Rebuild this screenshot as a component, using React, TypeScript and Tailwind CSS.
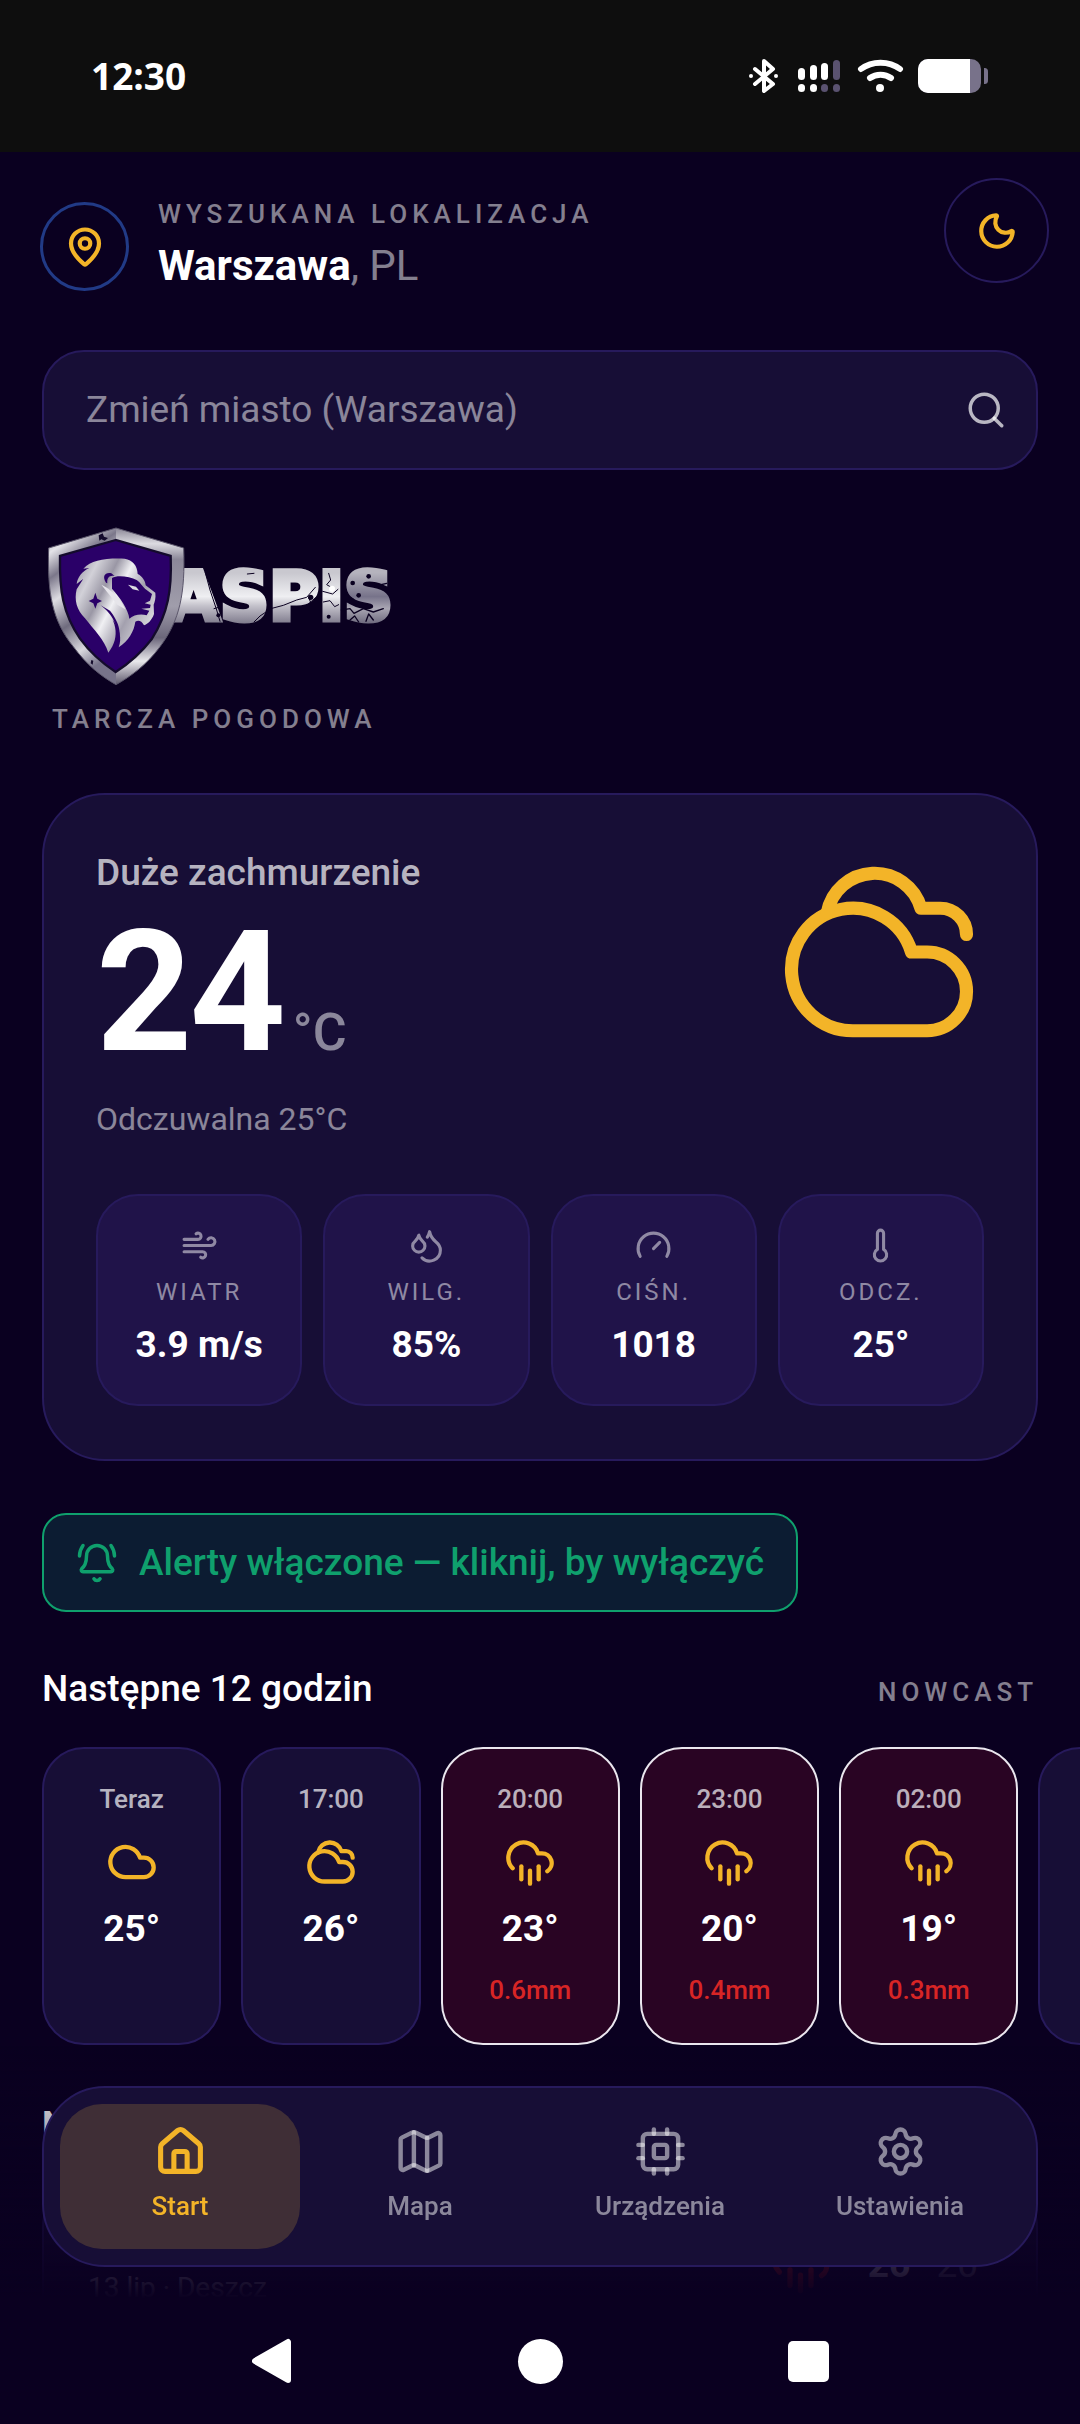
import type { ReactNode } from "react";
import {
  BellRing,
  Cloud,
  CloudRain,
  Cloudy,
  Droplets,
  House,
  Map as MapIcon,
  MapPin,
  Moon,
  Search,
  Settings,
  Thermometer,
  Wind,
} from "lucide-react";

type Sky = "cloud" | "cloudy" | "rain";

const hours: { time: string; sky: Sky; temp: string; rain?: string }[] = [
  { time: "Teraz", sky: "cloud", temp: "25°" },
  { time: "17:00", sky: "cloudy", temp: "26°" },
  { time: "20:00", sky: "rain", temp: "23°", rain: "0.6mm" },
  { time: "23:00", sky: "rain", temp: "20°", rain: "0.4mm" },
  { time: "02:00", sky: "rain", temp: "19°", rain: "0.3mm" },
  { time: "", sky: "cloud", temp: "" },
];

const skyIcons = { cloud: Cloud, cloudy: Cloudy, rain: CloudRain };

function GaugeIcon() {
  return (
    <svg viewBox="0 0 24 24" className="size-[37px]" fill="none" stroke="currentColor" strokeWidth="2" strokeLinecap="round" strokeLinejoin="round">
      <path d="m12 14 4-4" />
      <path d="M3.34 19a10 10 0 1 1 17.32 0" />
    </svg>
  );
}

function CpuIcon() {
  return (
    <svg viewBox="0 0 24 24" className="size-[53px]" fill="none" stroke="currentColor" strokeWidth="2" strokeLinecap="round" strokeLinejoin="round">
      <rect x="4" y="4" width="16" height="16" rx="2" />
      <rect x="9" y="9" width="6" height="6" rx="1" />
      <path d="M15 2v2" />
      <path d="M15 20v2" />
      <path d="M2 15h2" />
      <path d="M2 9h2" />
      <path d="M20 15h2" />
      <path d="M20 9h2" />
      <path d="M9 2v2" />
      <path d="M9 20v2" />
    </svg>
  );
}

function StatusBar() {
  return (
    <div className="flex h-[152px] items-center justify-between bg-[#0e0e0e] pr-[92px] pl-[91px] text-white">
      <span className="font-['Open_Sans'] text-[37px] leading-[44px] font-bold">12:30</span>
      <svg viewBox="0 0 240 36" className="h-[36px] w-[240px]" fill="none">
        <g stroke="#fff" strokeWidth="4" strokeLinejoin="round" strokeLinecap="round">
          <path d="M7 11 25 26 16 33V3L25 11 7 26" />
        </g>
        <circle cx="3" cy="18" r="2" fill="#fff" />
        <circle cx="28" cy="18" r="2" fill="#fff" />
        <g fill="#fff">
          <rect x="50" y="10" width="7" height="12" rx="3.500" />
          <rect x="62" y="7" width="7" height="15" rx="3.500" />
          <rect x="73" y="5" width="7" height="17" rx="3.500" />
          <rect x="50" y="26" width="7" height="8" rx="3.500" />
          <rect x="62" y="26" width="7" height="8" rx="3.500" />
        </g>
        <g fill="#5a5270">
          <rect x="85" y="2" width="7" height="20" rx="3.500" />
          <rect x="73" y="26" width="7" height="8" rx="3.500" />
          <rect x="85" y="26" width="7" height="8" rx="3.500" />
        </g>
        <g stroke="#fff" strokeWidth="6" strokeLinecap="round">
          <path d="M113 11C124 2.500 141 2.500 152 11" />
          <path d="M122 20C128 15.500 137 15.500 143 20" />
        </g>
        <circle cx="132" cy="30" r="4" fill="#fff" />
        <rect x="170" y="1" width="63" height="34" rx="10" fill="#78728a" />
        <path d="M180 1h42v34h-42a10 10 0 0 1-10-10V11a10 10 0 0 1 10-10Z" fill="#fff" />
        <path d="M236 10c3 0 4 1 4 4v8c0 3-1 4-4 4Z" fill="#78728a" />
      </svg>
    </div>
  );
}

function AspisLogo() {
  return (
    <svg viewBox="36 30 1080 504" className="h-[168px] w-[360px]" role="img" aria-label="Aspis">
      <defs>
        <linearGradient id="rimLeft" x1="0" y1="0" x2="0.300" y2="1">
          <stop offset="0" stopColor="#8d8a99" />
          <stop offset="0.150" stopColor="#e4e3e8" />
          <stop offset="0.300" stopColor="#7b778a" />
          <stop offset="0.450" stopColor="#dddce2" />
          <stop offset="0.650" stopColor="#6f6b7e" />
          <stop offset="0.850" stopColor="#d9d8de" />
          <stop offset="1" stopColor="#77738a" />
        </linearGradient>
        <linearGradient id="rimRight" x1="0" y1="0" x2="0" y2="1">
          <stop offset="0" stopColor="#8a8696" />
          <stop offset="0.100" stopColor="#dcdbe1" />
          <stop offset="0.200" stopColor="#8b8798" />
          <stop offset="0.500" stopColor="#a09dab" />
          <stop offset="0.700" stopColor="#6b667a" />
          <stop offset="0.850" stopColor="#e9e8ec" />
          <stop offset="1" stopColor="#5d586c" />
        </linearGradient>
        <linearGradient id="mane" x1="0" y1="0" x2="1" y2="0.600">
          <stop offset="0" stopColor="#8e8a9b" />
          <stop offset="0.220" stopColor="#d2d1d8" />
          <stop offset="0.400" stopColor="#9a97a5" />
          <stop offset="0.550" stopColor="#f0f0f3" />
          <stop offset="0.750" stopColor="#a3a0ae" />
          <stop offset="1" stopColor="#d9d8de" />
        </linearGradient>
        <linearGradient id="metal" x1="0" y1="0" x2="0" y2="1">
          <stop offset="0.200" stopColor="#c9c8cf" />
          <stop offset="0.500" stopColor="#efeff2" />
          <stop offset="0.620" stopColor="#c3c1ca" />
          <stop offset="0.850" stopColor="#7d798b" />
        </linearGradient>
        <linearGradient id="worn" x1="0" y1="0" x2="0" y2="1">
          <stop offset="0.200" stopColor="#b5b3bd" />
          <stop offset="0.500" stopColor="#77738a" />
          <stop offset="0.650" stopColor="#a9a6b3" />
          <stop offset="0.850" stopColor="#6c687c" />
        </linearGradient>
      </defs>

      <text x="412" y="330" fontFamily="'DejaVu Sans', sans-serif" fontWeight="700" fontSize="204" fill="url(#metal)" stroke="url(#metal)" strokeWidth="15">
        ASPI<tspan fill="url(#worn)" stroke="url(#worn)">S</tspan>
      </text>
      <g stroke="#0a0020" fill="none" strokeLinejoin="round" strokeLinecap="round">
        <path d="M526 188 540 240 560 300 570 334M552 296l14-4" strokeWidth="3" />
        <path d="M722 296 760 286 800 270 830 262 856 232M800 292 830 286 858 262M836 262l10 26" strokeWidth="3" />
        <path d="M878 244 908 252 924 238M880 276 900 272 914 290 926 284M896 190l6 20-12 14 14 8" strokeWidth="3" />
        <path d="M672 336 690 318 708 306M652 192l20-2" strokeWidth="3" />
        <path d="M934 300 960 296 972 310 1000 296 1030 306 1060 296M940 250l30 18M1070 220l-34 8M960 330l14-12 12 18M1008 334l8-22 14 18" strokeWidth="4" />
      </g>
      <g fill="#0a0020">
        <circle cx="565" cy="316" r="6" />
        <circle cx="968" cy="219" r="7" />
        <circle cx="1016" cy="199" r="7" />
        <circle cx="986" cy="256" r="7" />
        <circle cx="896" cy="320" r="6" />
        <circle cx="842" cy="262" r="8" />
      </g>
      <circle cx="906" cy="236" r="9" fill="#fff" />

      <path d="M258 54 56 114C52 250 66 330 130 410 170 465 215 500 258 524Z" fill="url(#rimLeft)" />
      <path d="M258 54 461 114C466 250 450 330 390 410 350 465 301 500 258 524Z" fill="url(#rimRight)" />
      <path d="M258 54 56 114C52 250 66 330 130 410 170 465 215 500 258 524 301 500 350 465 390 410 450 330 466 250 461 114Z" fill="none" stroke="#5b566b" strokeWidth="3" />
      <path d="M257 90 90 138C88 240 98 310 150 386 182 430 220 462 257 486 294 462 332 430 366 386 414 310 426 240 422 138Z" fill="#2a0068" stroke="#140b2c" strokeWidth="7" />
      <path d="M206 76l12-6 4 10 12 4-10 8-10-4-6 4zM184 450l6 2-2 12-6-4z" fill="#140b2c" />

      <path
        d="M160 176C184 150 226 144 284 146 308 150 322 166 323 192 336 198 346 212 347 226L376 248C378 264 374 276 371 284L372 312C366 330 354 342 342 346 334 330 324 330 316 335 312 364 296 392 266 412 276 386 270 356 246 326L214 286C258 324 274 380 235 428 224 390 190 358 165 325 140 300 132 270 140 238L160 206 140 222C142 202 156 184 178 174Z"
        fill="url(#mane)"
      />
      <path d="M212 286C246 312 270 350 262 404 280 366 262 330 240 302Z" fill="#2a0068" />
      <path d="M246 204C262 194 300 200 320 210 334 220 338 232 350 240L366 252 360 272 344 280 362 284 360 294 334 296 358 302 350 316C334 310 310 314 298 326 296 300 270 262 246 236Z" fill="#2a0068" />
      <path d="M228 218C216 200 224 186 244 190L254 198C240 194 230 202 232 220Z" fill="#2a0068" />
      <path d="M294 224 318 230 328 242 308 238Z" fill="#dddce2" />
      <path d="M196 248 202 266 216 273 202 280 196 296 190 280 176 273 190 266Z" fill="#2a0068" />
      <path d="M214 224C240 236 270 262 286 298L262 284Z" fill="#e6e5ea" />
    </svg>
  );
}

function Stat({ icon, label, value }: { icon: ReactNode; label: string; value: string }) {
  return (
    <div className="flex flex-col items-center rounded-[42px] border-2 border-[#271a5c] bg-[#201349] pt-[31px] pb-[37px]">
      <span className="text-white/50">{icon}</span>
      <span className="mt-[14px] text-[24px] leading-[28px] tracking-[3px] text-white/50">{label}</span>
      <span className="mt-[17px] text-[37px] leading-[44px] font-bold">{value}</span>
    </div>
  );
}

function HourCard({ time, sky, temp, rain }: (typeof hours)[number]) {
  const Icon = skyIcons[sky];
  return (
    <li
      className={
        rain
          ? "flex h-[298px] flex-col items-center rounded-[42px] border-2 border-[#eae6ee] bg-[#290423] pt-[35px]"
          : "flex h-[298px] flex-col items-center rounded-[42px] border-2 border-[#271a5c] bg-[#170e36] pt-[35px]"
      }
    >
      <span className="text-[26px] leading-[30px] font-medium text-white/70">{time}</span>
      {temp && <Icon className="mt-[22px] size-[52px] text-[#f3b428]" strokeWidth={2} />}
      <span className="mt-[19px] text-[37px] leading-[44px] font-bold">{temp}</span>
      {rain && <span className="mt-[24px] text-[26px] leading-[30px] font-medium text-[#d82525]">{rain}</span>}
    </li>
  );
}

function Tab({ icon, label, active }: { icon: ReactNode; label: string; active?: boolean }) {
  return (
    <a
      href="#"
      aria-current={active ? "page" : undefined}
      className={
        active
          ? "flex flex-1 flex-col items-center rounded-[42px] bg-[#3f2e36] pt-[21px] pb-[28px] text-[#f3b428]"
          : "flex flex-1 flex-col items-center rounded-[42px] pt-[21px] pb-[28px] text-white/50"
      }
    >
      {icon}
      <span className="mt-[13px] text-[26px] leading-[30px] font-medium">{label}</span>
    </a>
  );
}

export default function App() {
  return (
    <div className="h-screen overflow-hidden bg-[#0a0020] font-['Roboto',sans-serif] text-white">
      <StatusBar />

      <header className="flex items-start justify-between pt-[26px] pr-[31px] pl-[40px]">
        <div className="flex items-start gap-[29px]">
          <div className="mt-[24px] flex size-[89px] items-center justify-center rounded-full border-[3px] border-[#213a86]">
            <MapPin className="size-[42px] text-[#f3b428]" strokeWidth={2.4} />
          </div>
          <div className="mt-[21px] flex flex-col">
            <span className="text-[26px] leading-[30px] font-medium tracking-[5px] text-white/50">WYSZUKANA LOKALIZACJA</span>
            <h1 className="mt-[13px] text-[42px] leading-[48px] font-bold">
              Warszawa<span className="font-normal text-white/50">, PL</span>
            </h1>
          </div>
        </div>
        <button type="button" aria-label="Tryb nocny" className="flex size-[105px] items-center justify-center rounded-full border-2 border-[#271a5c]">
          <Moon className="size-[42px] text-[#f3b428]" strokeWidth={2.4} />
        </button>
      </header>

      <main className="px-[42px]">
        <form className="mt-[59px] flex h-[120px] items-center rounded-[42px] border-2 border-[#271a5c] bg-[#170e36] pr-[29px] pl-[42px]">
          <input
            type="text"
            aria-label="Zmień miasto"
            placeholder="Zmień miasto (Warszawa)"
            className="min-w-0 flex-1 bg-transparent text-[37px] leading-[44px] outline-none placeholder:text-white/50"
          />
          <button type="button" aria-label="Szukaj" className="text-white/70">
            <Search className="size-[42px]" strokeWidth={2} />
          </button>
        </form>

        <section className="mt-[50px] flex flex-col items-start">
          <AspisLogo />
          <p className="mt-[16px] pl-[10px] text-[26px] leading-[30px] font-medium tracking-[5px] text-white/50">TARCZA POGODOWA</p>
        </section>

        <section className="mt-[59px] rounded-[63px] border-2 border-[#271a5c] bg-[#170e36] px-[52px] pt-[52px] pb-[53px]">
          <div className="flex items-start justify-between">
            <div>
              <h2 className="mt-[1px] text-[37px] leading-[50px] font-medium text-white/70">Duże zachmurzenie</h2>
              <p className="mt-[11px] flex items-baseline gap-[10px]">
                <span className="text-[168px] leading-[168px] font-bold tracking-[-3px]">24</span>
                <span className="text-[52px] leading-[60px] font-medium text-white/50">°C</span>
              </p>
              <p className="mt-[23px] text-[32px] leading-[38px] text-white/50">Odczuwalna 25°C</p>
            </div>
            <Cloudy className="size-[210px] text-[#f3b428]" strokeWidth={1.5} />
          </div>
          <div className="mt-[56px] grid grid-cols-4 gap-[21px]">
            <Stat icon={<Wind className="size-[37px]" />} label="WIATR" value="3.9 m/s" />
            <Stat icon={<Droplets className="size-[37px]" />} label="WILG." value="85%" />
            <Stat icon={<GaugeIcon />} label="CIŚN." value="1018" />
            <Stat icon={<Thermometer className="size-[37px]" />} label="ODCZ." value="25°" />
          </div>
        </section>

        <button type="button" className="mt-[52px] flex h-[99px] items-center gap-[21px] rounded-[24px] border-2 border-[#0fa06d] bg-[#0c1c32] px-[32px] text-[#0fa06d]">
          <BellRing className="size-[42px]" />
          <span className="text-[37px] leading-[44px] font-medium">Alerty włączone — kliknij, by wyłączyć</span>
        </button>

        <section className="mt-[55px]">
          <div className="flex items-baseline justify-between">
            <h2 className="text-[37px] leading-[44px] font-medium">Następne 12 godzin</h2>
            <span className="text-[26px] leading-[30px] font-medium tracking-[5px] text-white/50">NOWCAST</span>
          </div>
          <ul className="mt-[36px] grid auto-cols-[18%] grid-flow-col gap-[20px]">
            {hours.map((hour, index) => (
              <HourCard key={index} {...hour} />
            ))}
          </ul>
        </section>

        <section className="mt-[58px]">
          <h2 className="text-[37px] leading-[44px] font-bold">N</h2>
          <div className="mt-[18px] flex items-start justify-between rounded-[63px] border-2 border-[#271a5c] bg-[#170e36] px-[44px] pt-[66px] pb-[60px]">
            <span className="mt-[40px] text-[28px] leading-[30px]">13 lip · Deszcz</span>
            <span className="flex items-center gap-[12px] text-[37px] leading-[60px]">
              <CloudRain className="mr-[24px] size-[63px] text-[#dc2626]" />
              <span className="font-bold">26°</span>
              <span className="text-white/50">20°</span>
            </span>
          </div>
        </section>
      </main>

      <footer className="fixed inset-x-0 bottom-0">
        <div className="bg-linear-to-b from-transparent to-[#0a0020] px-[42px] pt-[40px] pb-[31px]">
          <nav className="flex rounded-[63px] border-2 border-[#271a5c] bg-[#170e36] p-[16px]">
            <Tab icon={<House className="size-[53px]" strokeWidth={2.3} />} label="Start" active />
            <Tab icon={<MapIcon className="size-[53px]" />} label="Mapa" />
            <Tab icon={<CpuIcon />} label="Urządzenia" />
            <Tab icon={<Settings className="size-[53px]" />} label="Ustawienia" />
          </nav>
        </div>
        <div className="flex h-[126px] items-center justify-center gap-[225px] bg-[#0a0020]">
          <button type="button" aria-label="Wstecz">
            <svg viewBox="0 0 41 46" className="h-[46px] w-[41px]" fill="#fff" stroke="#fff" strokeWidth="6" strokeLinejoin="round">
              <path d="M3 23 36 4V42Z" />
            </svg>
          </button>
          <button type="button" aria-label="Ekran główny" className="size-[45px] rounded-full bg-white" />
          <button type="button" aria-label="Ostatnie aplikacje" className="size-[41px] rounded-[5px] bg-white" />
        </div>
      </footer>
    </div>
  );
}
